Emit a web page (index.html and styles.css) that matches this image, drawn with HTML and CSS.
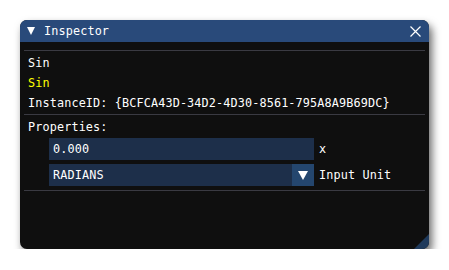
FILE: index.html
```html
<!DOCTYPE html>
<html>
<head>
<meta charset="utf-8">
<link rel="stylesheet" href="styles.css">
</head>
<body>
<div class="window">
  <div class="titlebar">
    <span class="collapse"></span>
    <span class="title">Inspector</span>
    <svg class="close" width="11" height="11" viewBox="0 0 11 11"><path d="M0.5 0.5 L10.5 10.5 M10.5 0.5 L0.5 10.5" stroke="#fff" stroke-width="1.2" fill="none"/></svg>
  </div>
  <div class="content">
    <div class="sep top"></div>
    <div class="row">Sin</div>
    <div class="row yellow">Sin</div>
    <div class="row">InstanceID: {BCFCA43D-34D2-4D30-8561-795A8A9B69DC}</div>
    <div class="sep mid"></div>
    <div class="row">Properties:</div>
    <div class="field-row first">
      <div class="input">0.000</div>
      <span class="label">x</span>
    </div>
    <div class="field-row">
      <div class="input combo"><span class="value">RADIANS</span><span class="arrow"></span></div>
      <span class="label">Input Unit</span>
    </div>
    <div class="sep bottom"></div>
  </div>
  <div class="grip"></div>
</div>
</body>
</html>
```
FILE: styles.css
```css
html, body {
  margin: 0;
  padding: 0;
  background: #ffffff;
}
body {
  padding: 20px 0 0 20px;
  font-family: "DejaVu Sans Mono", "Liberation Mono", monospace;
  font-size: 11.8px;
  letter-spacing: 0.13px;
  color: #ffffff;
}
.window {
  position: relative;
  width: 409px;
  height: 229px;
  background: #0f0f0f;
  border-radius: 7px;
  box-shadow: 3px 5px 9px rgba(0, 0, 0, 0.6);
  overflow: hidden;
}
.titlebar {
  height: 22px;
  background: #294a7a;
  display: flex;
  align-items: center;
  padding: 0 8px 0 7px;
}
.collapse {
  width: 0;
  height: 0;
  border-left: 4.5px solid transparent;
  border-right: 4.5px solid transparent;
  border-top: 8px solid #ffffff;
  margin-right: 9px;
}
.title {
  flex: 1;
  line-height: 22px;
}
.close {
  display: block;
}
.content {
  display: flex;
  flex-direction: column;
  padding: 0 4px;
}
.sep {
  height: 1px;
  background: #3a3a42;
}
.sep.top {
  margin-top: 8px;
  margin-bottom: 2px;
}
.sep.mid {
  margin-top: 1px;
  margin-bottom: 2px;
}
.sep.bottom {
  margin-top: 4px;
}
.row {
  height: 20px;
  line-height: 20px;
  padding-left: 4px;
  white-space: nowrap;
}
.yellow {
  color: #ffff00;
}
.field-row {
  display: flex;
  align-items: center;
  padding-left: 25px;
  margin-top: 4px;
}
.field-row.first {
  margin-top: 1px;
}
.input {
  width: 265px;
  height: 22px;
  line-height: 22px;
  background: #1d2f4a;
  padding-left: 4px;
  box-sizing: border-box;
}
.combo {
  display: flex;
  padding-left: 0;
}
.combo .value {
  flex: 1;
  padding-left: 4px;
}
.arrow {
  width: 22px;
  height: 22px;
  background: #24466e;
  position: relative;
}
.arrow::after {
  content: "";
  position: absolute;
  left: 6px;
  top: 7px;
  border-left: 5px solid transparent;
  border-right: 5px solid transparent;
  border-top: 9px solid #ffffff;
}
.label {
  margin-left: 5px;
  line-height: 22px;
}
.grip {
  position: absolute;
  right: 0;
  bottom: 0;
  width: 0;
  height: 0;
  border-left: 15px solid transparent;
  border-bottom: 15px solid #1f3a5c;
}
```
